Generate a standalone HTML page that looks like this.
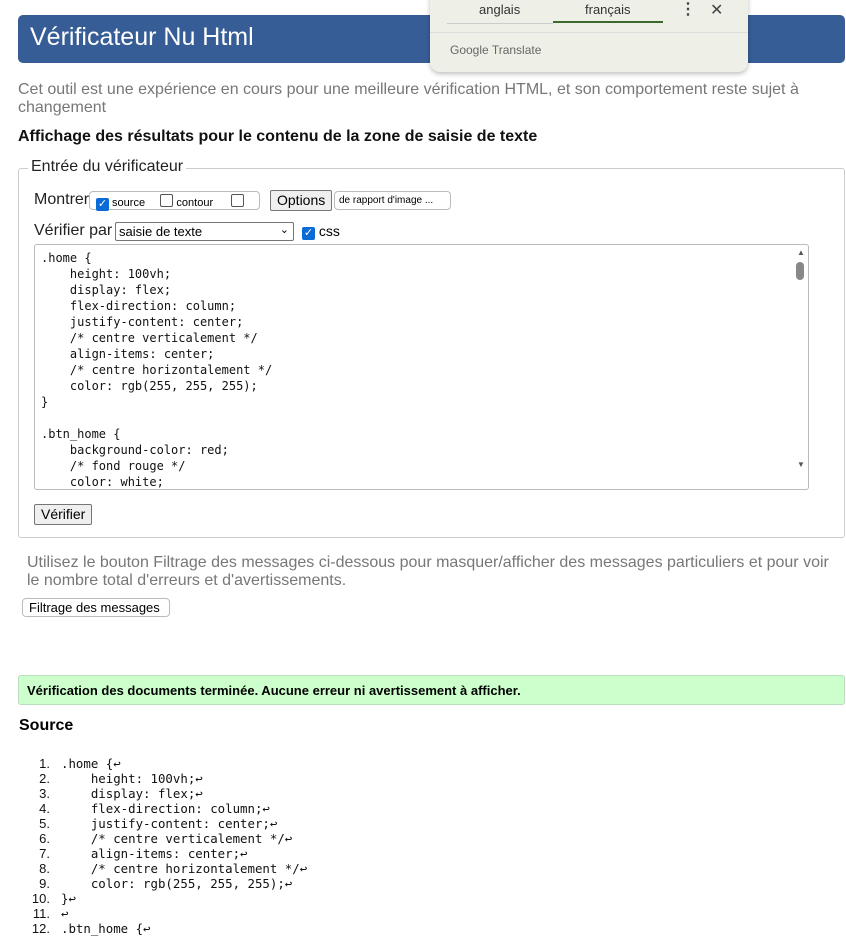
<!DOCTYPE html>
<html><head><meta charset="utf-8"><style>
*{box-sizing:border-box}
body{margin:0;width:846px;height:931px;overflow:hidden;background:#fff;font-family:"Liberation Sans",Arial,sans-serif;position:relative}
.a{position:absolute;white-space:nowrap}
.hdr{left:18px;top:15px;width:827px;height:48px;background:#365d96;border-radius:5px;color:#fff;font-size:25px;padding:8px 0 0 12px}
.gt{left:430px;top:-8px;width:318px;height:80px;background:#eef0e8;border-radius:0 0 10px 10px;box-shadow:0 2px 5px rgba(0,0,0,.25)}
.gray{color:#777;font-size:16px}
.mono{font-family:"DejaVu Sans Mono","Liberation Mono",monospace}
.btn{border:1px solid #767676;background:#efefef;border-radius:2px;font-size:13px;padding:1px 6px}
.cb{display:inline-block;width:13px;height:13px;border:1px solid #555;border-radius:2px;vertical-align:-1px;background:#fff}
.cbc{background:#0b6bd6;border-color:#0b6bd6;color:#fff;font-size:11px;line-height:11px;text-align:center}
</style></head><body>
<div class="a hdr">Vérificateur Nu Html</div>
<div class="a gt">
 <div class="a" style="left:49px;top:10px;font-size:13px;color:#333">anglais</div>
 <div class="a" style="left:155px;top:10px;font-size:13px;color:#333">français</div>
 <div class="a" style="left:17px;top:31px;width:106px;height:1px;background:#ccc"></div>
 <div class="a" style="left:123px;top:29px;width:110px;height:2px;background:#3a6a2a"></div>
 <div class="a" style="left:250px;top:7px;font-size:16px;color:#444;font-weight:bold">⋮</div>
 <div class="a" style="left:280px;top:8px;font-size:16px;color:#444">✕</div>
 <div class="a" style="left:0;top:40px;width:318px;height:1px;background:#ddd"></div>
 <div class="a" style="left:20px;top:51px;font-size:12px;color:#666">Google Translate</div>
</div>
<div class="a gray" style="left:18px;top:81px;line-height:18px">Cet outil est une expérience en cours pour une meilleure vérification HTML, et son comportement reste sujet à<br>changement</div>
<div class="a" style="left:18px;top:128px;font-size:16px;font-weight:bold;color:#111">Affichage des résultats pour le contenu de la zone de saisie de texte</div>
<div class="a" style="left:18px;top:168px;width:827px;height:370px;border:1px solid #ccc;border-radius:3px"></div>
<div class="a" style="left:28px;top:158px;font-size:16px;background:#fff;padding:0 3px;color:#222">Entrée du vérificateur</div>
<div class="a" style="left:34px;top:191px;font-size:16px;color:#222">Montrer</div>
<div class="a" style="left:89px;top:191px;width:171px;height:19px;border:1px solid #bbb;border-radius:4px;font-size:11px;padding:2px 6px"><span class="cb cbc">✓</span> source &nbsp;&nbsp;&nbsp; <span class="cb"></span> contour &nbsp;&nbsp;&nbsp;&nbsp; <span class="cb"></span></div>
<div class="a btn" style="left:270px;top:190px;height:21px;font-size:14px">Options</div>
<div class="a" style="left:334px;top:191px;width:117px;height:19px;border:1px solid #bbb;border-radius:4px;font-size:10px;padding:3px 4px">de rapport d'image ...</div>
<div class="a" style="left:34px;top:222px;font-size:16px;color:#222">Vérifier par</div>
<div class="a" style="left:115px;top:222px;width:179px;height:19px;border:1px solid #767676;border-radius:2px;font-size:13px;padding:1px 3px">saisie de texte<span style="position:absolute;right:4px;top:0;font-size:11px">⌄</span></div>
<div class="a" style="left:302px;top:223px;font-size:14px"><span class="cb cbc" style="vertical-align:0">✓</span> css</div>
<div class="a mono" style="left:34px;top:244px;width:775px;height:246px;border:1px solid #bbb;border-radius:3px;font-size:12px;line-height:16px;padding:5px 6px;white-space:pre;overflow:hidden;color:#111">.home {
    height: 100vh;
    display: flex;
    flex-direction: column;
    justify-content: center;
    /* centre verticalement */
    align-items: center;
    /* centre horizontalement */
    color: rgb(255, 255, 255);
}

.btn_home {
    background-color: red;
    /* fond rouge */
    color: white;</div>
<div class="a" style="left:796px;top:262px;width:8px;height:18px;background:#888;border-radius:4px"></div>
<div class="a" style="left:797px;top:248px;font-size:8px;color:#555">▲</div>
<div class="a" style="left:797px;top:460px;font-size:8px;color:#555">▼</div>
<div class="a btn" style="left:34px;top:504px;height:21px;font-size:14px">Vérifier</div>
<div class="a gray" style="left:27px;top:554px;line-height:18px">Utilisez le bouton Filtrage des messages ci-dessous pour masquer/afficher des messages particuliers et pour voir<br>le nombre total d'erreurs et d'avertissements.</div>
<div class="a" style="left:22px;top:598px;width:148px;height:19px;border:1px solid #bbb;border-radius:4px;font-size:13px;padding:1px 6px">Filtrage des messages</div>
<div class="a" style="left:18px;top:675px;width:827px;height:30px;background:#ccffcc;border:1px solid #bbddbb;border-radius:3px;font-size:13px;font-weight:bold;padding:7px 8px">Vérification des documents terminée. Aucune erreur ni avertissement à afficher.</div>
<div class="a" style="left:19px;top:717px;font-size:16px;font-weight:bold">Source</div>
<div class="a" style="left:28px;top:756px;font-size:13px;line-height:15px;text-align:right;width:22px;white-space:pre;color:#111">1.
2.
3.
4.
5.
6.
7.
8.
9.
10.
11.
12.</div>
<div class="a mono" style="left:61px;top:756px;font-size:12.4px;line-height:15px;white-space:pre;color:#111">.home {↩
    height: 100vh;↩
    display: flex;↩
    flex-direction: column;↩
    justify-content: center;↩
    /* centre verticalement */↩
    align-items: center;↩
    /* centre horizontalement */↩
    color: rgb(255, 255, 255);↩
}↩
↩
.btn_home {↩</div>
</body></html>
